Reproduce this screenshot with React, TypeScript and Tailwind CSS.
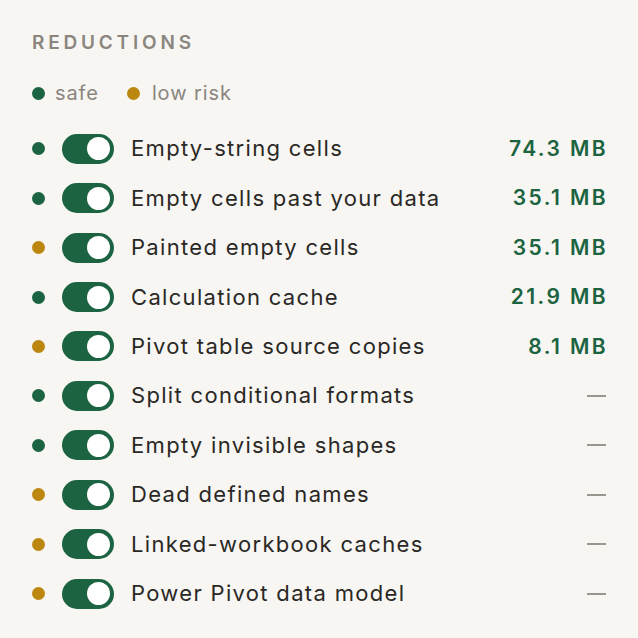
const rows: { label: string; risk: 'safe' | 'low'; size?: string }[] = [
  { label: 'Empty-string cells', risk: 'safe', size: '74.3 MB' },
  { label: 'Empty cells past your data', risk: 'safe', size: '35.1 MB' },
  { label: 'Painted empty cells', risk: 'low', size: '35.1 MB' },
  { label: 'Calculation cache', risk: 'safe', size: '21.9 MB' },
  { label: 'Pivot table source copies', risk: 'low', size: '8.1 MB' },
  { label: 'Split conditional formats', risk: 'safe' },
  { label: 'Empty invisible shapes', risk: 'safe' },
  { label: 'Dead defined names', risk: 'low' },
  { label: 'Linked-workbook caches', risk: 'low' },
  { label: 'Power Pivot data model', risk: 'low' },
];

function Toggle() {
  return (
    <div className="flex h-[30px] w-[52px] shrink-0 items-center justify-end rounded-full bg-[#1b6341] pr-[4px]">
      <div className="h-[23px] w-[23px] rounded-full bg-white" />
    </div>
  );
}

export default function App() {
  return (
    <div className="h-[638px] w-[638px] bg-[#f7f6f2] px-[32px] pt-[30px] font-['Inter','Noto_Sans',sans-serif]">
      <div className="h-[26px] text-[19px] font-semibold leading-[26px] tracking-[0.2em] text-[#8a857e]">
        REDUCTIONS
      </div>
      <div className="mt-[24px] flex h-[26px] items-center text-[20px] tracking-[0.045em] text-[#8a857e]">
        <span className="h-[13px] w-[13px] rounded-full bg-[#1b6341]" />
        <span className="ml-[10px]">safe</span>
        <span className="ml-[28px] h-[13px] w-[13px] rounded-full bg-[#bb8710]" />
        <span className="ml-[12px]">low risk</span>
      </div>
      <div className="mt-[18px] flex flex-col">
        {rows.map((r) => (
          <div key={r.label} className="flex h-[49.45px] items-center">
            <span
              className={
                'h-[13px] w-[13px] shrink-0 rounded-full ' +
                (r.risk === 'safe' ? 'bg-[#1b6341]' : 'bg-[#bb8710]')
              }
            />
            <div className="ml-[17px]">
              <Toggle />
            </div>
            <span className="ml-[17px] flex-1 text-[22px] tracking-[0.06em] text-[#2a2825]">{r.label}</span>
            {r.size ? (
              <span className="mr-[-2px] text-[21px] font-semibold tracking-[0.115em] text-[#1b6341]">{r.size}</span>
            ) : (
              <span className="h-[2px] w-[19px] bg-[#9a958d]" />
            )}
          </div>
        ))}
      </div>
    </div>
  );
}
